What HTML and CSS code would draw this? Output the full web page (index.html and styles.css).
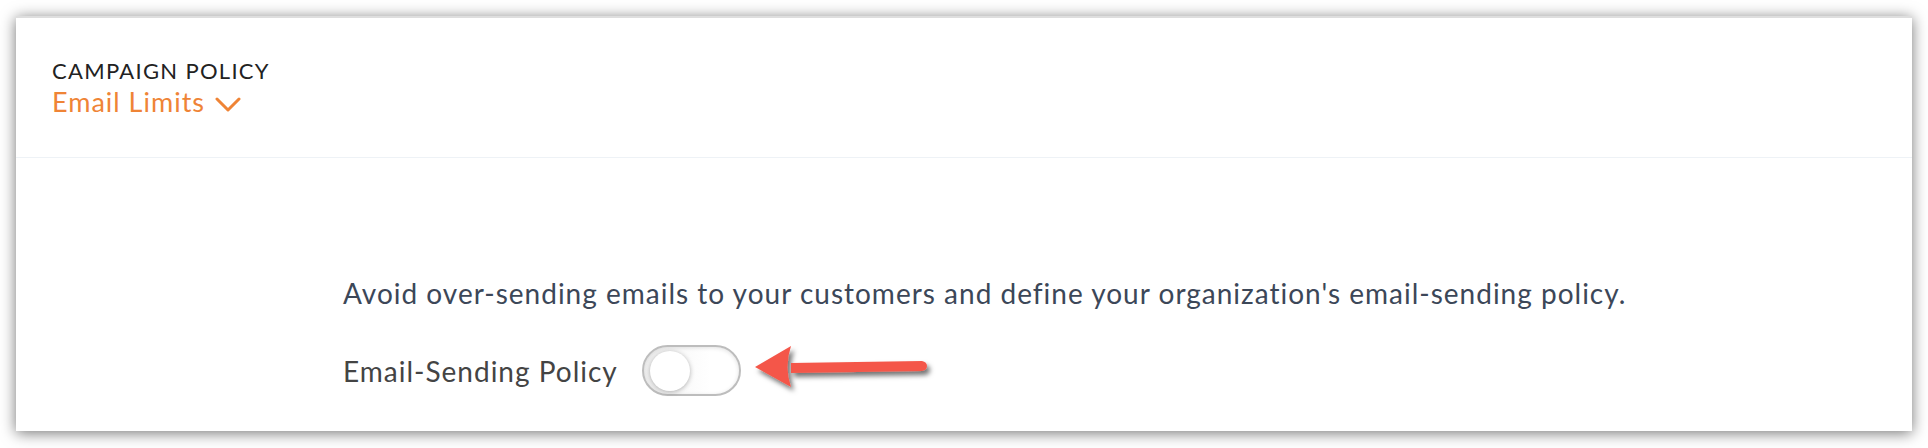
FILE: index.html
```html
<!DOCTYPE html>
<html>
<head>
<meta charset="utf-8">
<link rel="stylesheet" href="styles.css">
</head>
<body>
<div class="panel">
  <div class="header">
    <div class="eyebrow">CAMPAIGN POLICY</div>
    <div class="title">Email Limits
      <svg class="chev" width="26" height="16" viewBox="0 0 26 16"><path d="M2 2 L13 13 L24 2" fill="none" stroke="#ef8436" stroke-width="3" stroke-linecap="round" stroke-linejoin="round"/></svg>
    </div>
  </div>
  <div class="body">
    <p class="desc">Avoid over-sending emails to your customers and define your organization's email-sending policy.</p>
    <div class="row">
      <span class="label">Email-Sending Policy</span>
      <span class="toggle"><span class="knob"></span></span>
      <svg class="arrow" width="200" height="60" viewBox="0 0 200 60">
        <defs>
          <filter id="sh" x="-20%" y="-40%" width="150%" height="200%">
            <feDropShadow dx="3" dy="4" stdDeviation="2.5" flood-color="#000" flood-opacity="0.55"/>
          </filter>
        </defs>
        <g filter="url(#sh)">
          <path d="M40 22 L171 20 Q176 21 176 25 Q176 29 171 30 L40 32 Z" fill="#f4574a"/>
          <path d="M4 26 L40 5 Q33 26 40 46 Z" fill="#f4574a"/>
        </g>
      </svg>
    </div>
  </div>
</div>
</body>
</html>
```
FILE: styles.css
```css
html, body {
  margin: 0;
  padding: 0;
  background: #ffffff;
}
body {
  width: 1928px;
  height: 448px;
  overflow: hidden;
  font-family: Lato, "Liberation Sans", sans-serif;
}
.panel {
  margin: 16px 0 0 16px;
  width: 1896px;
  height: 415px;
  background: #fff;
  border-top: 2px solid #dedede;
  box-sizing: border-box;
  box-shadow: 0 2px 14px rgba(0,0,0,0.55);
  display: flex;
  flex-direction: column;
}
.header {
  height: 140px;
  box-sizing: border-box;
  border-bottom: 1px solid #eef2f6;
  padding: 39px 0 0 36px;
}
.eyebrow {
  font-size: 22px;
  color: #222;
  letter-spacing: 1.3px;
  line-height: 28px;
}
.title {
  font-size: 27px;
  color: #ef8436;
  letter-spacing: 1px;
  line-height: 34px;
  display: flex;
  align-items: center;
  gap: 10px;
}
.chev { margin-top: 6px; }
.body {
  padding: 118px 0 0 327px;
}
.desc {
  margin: 0;
  font-size: 28px;
  line-height: 34px;
  color: #3c4758;
  letter-spacing: 1px;
}
.row {
  margin-top: 35px;
  display: flex;
  align-items: center;
  position: relative;
}
.label {
  font-size: 28px;
  color: #444;
  letter-spacing: 1px;
}
.toggle {
  margin-left: 24px;
  width: 99px;
  height: 51px;
  box-sizing: border-box;
  border: 2px solid #bdbdbd;
  border-radius: 26px;
  background: linear-gradient(90deg, #f3f3f3, #fff 70%);
  box-shadow: inset 0 1px 4px rgba(0,0,0,0.12);
  display: flex;
  align-items: center;
  padding-left: 6px;
}
.knob {
  width: 40px;
  height: 40px;
  border-radius: 50%;
  background: #fff;
  box-shadow: 0 1px 5px rgba(0,0,0,0.3);
}
.arrow {
  position: absolute;
  left: 408px;
  top: -4px;
}
```
